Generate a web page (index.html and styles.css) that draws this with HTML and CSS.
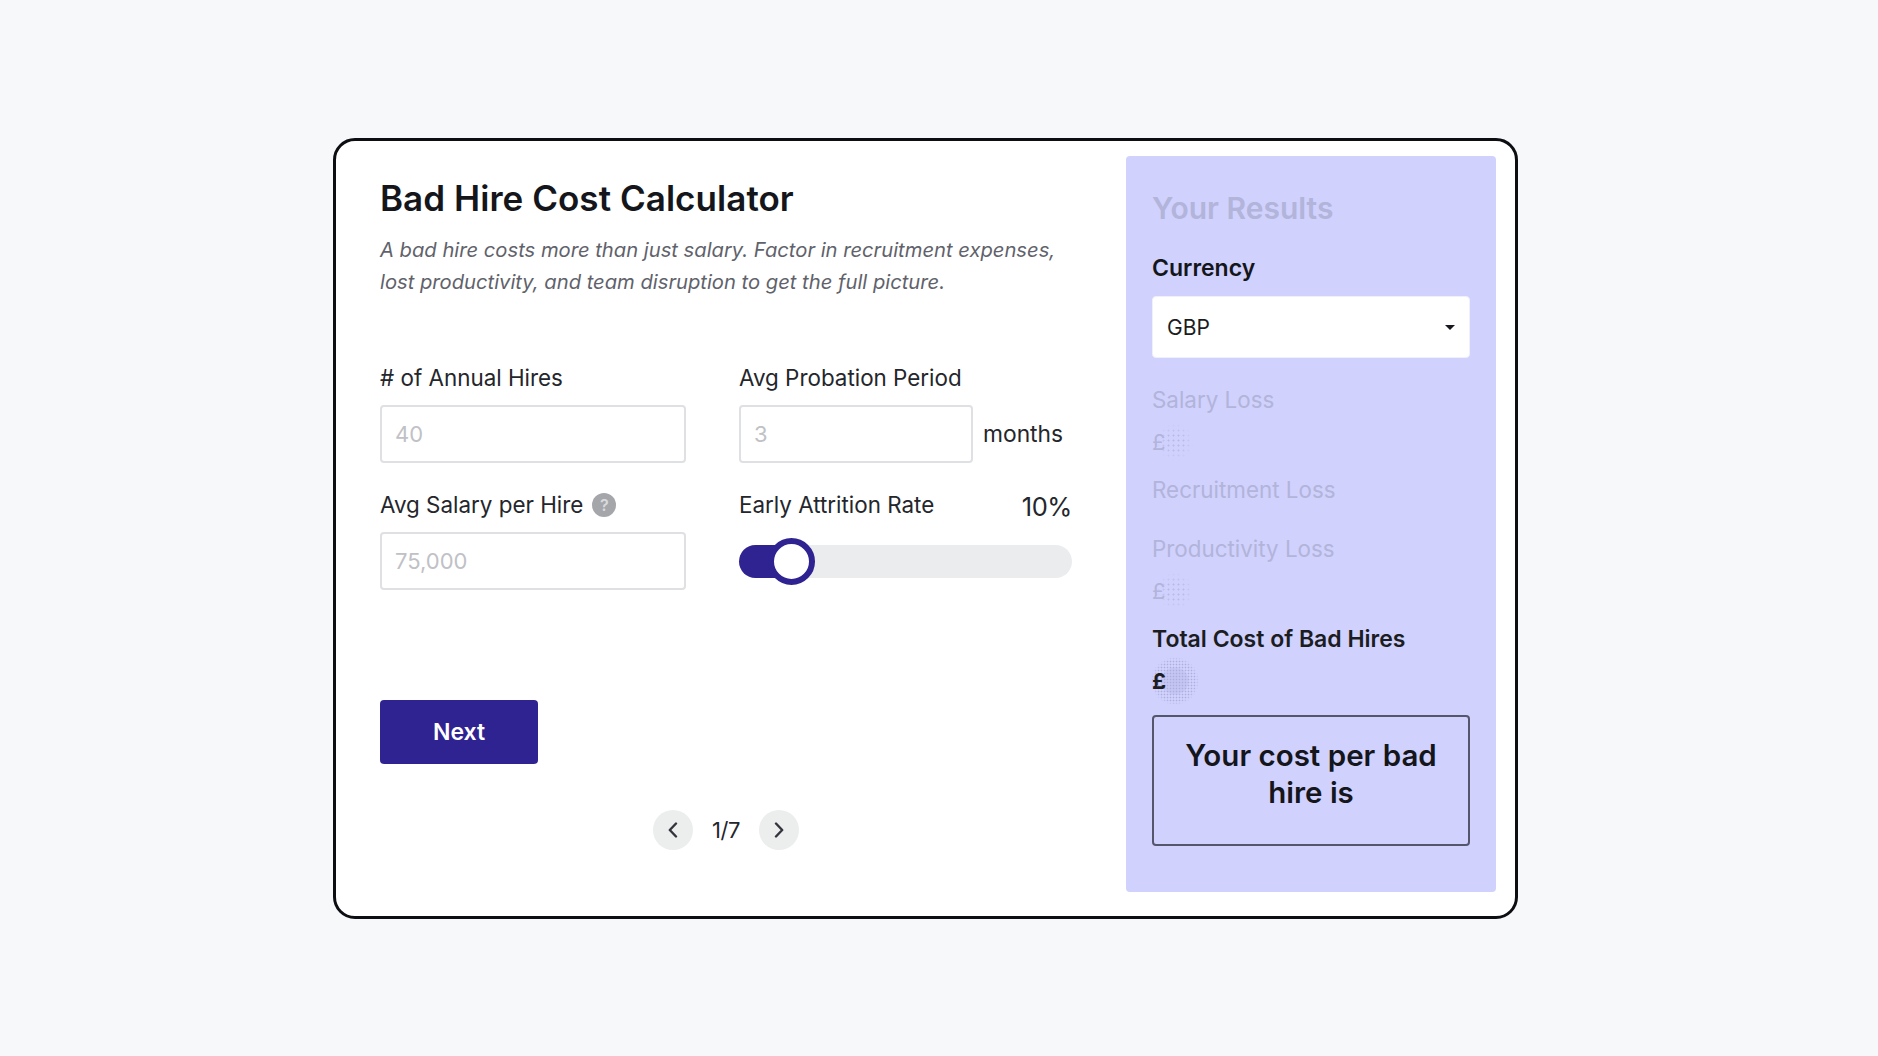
FILE: index.html
```html
<!DOCTYPE html>
<html lang="en">
<head>
<meta charset="utf-8">
<title>Bad Hire Cost Calculator</title>
<link rel="stylesheet" href="styles.css">
</head>
<body>
<main class="card">
  <section class="calc">
    <h1 class="title">Bad Hire Cost Calculator</h1>
    <p class="lead">A bad hire costs more than just salary. Factor in recruitment expenses, lost productivity, and team disruption to get the full picture.</p>
    <div class="fields">
      <div class="field">
        <label class="label">
          <span># of Annual Hires</span>
        </label>
        <input class="input" type="text" placeholder="40">
      </div>
      <div class="field">
        <label class="label">
          <span>Avg Probation Period</span>
        </label>
        <div class="with-unit">
          <input class="input input-short" type="text" placeholder="3">
          <span class="unit">months</span>
        </div>
      </div>
      <div class="field">
        <label class="label">
          <span>Avg Salary per Hire</span>
          <span class="help">?</span>
        </label>
        <input class="input" type="text" placeholder="75,000">
      </div>
      <div class="field">
        <label class="label label-split">
          <span>Early Attrition Rate</span>
          <span class="pct">10%</span>
        </label>
        <div class="slider">
          <div class="slider-fill"></div>
          <div class="slider-thumb"></div>
        </div>
      </div>
    </div>
    <button class="next" type="button">Next</button>
    <nav class="pager">
      <span class="pager-btn">
        <svg width="12" height="16" viewBox="0 0 12 16"><path d="M9 1.5 2.8 8 9 14.5" fill="none" stroke="#33343c" stroke-width="2.4" stroke-linecap="round" stroke-linejoin="round"/></svg>
      </span>
      <span class="pager-text">1/7</span>
      <span class="pager-btn">
        <svg width="12" height="16" viewBox="0 0 12 16"><path d="M3 1.5 9.2 8 3 14.5" fill="none" stroke="#33343c" stroke-width="2.4" stroke-linecap="round" stroke-linejoin="round"/></svg>
      </span>
    </nav>
  </section>
  <aside class="results">
    <h2 class="results-title">Your Results</h2>
    <div class="currency-label">Currency</div>
    <div class="select-wrap">
      <select class="select"><option>GBP</option></select>
      <span class="caret"></span>
    </div>
    <div class="metric muted">
      <div class="metric-label">Salary Loss</div>
      <div class="metric-value">£<span class="blur"></span></div>
    </div>
    <div class="metric muted">
      <div class="metric-label">Recruitment Loss</div>
    </div>
    <div class="metric muted metric-gap">
      <div class="metric-label">Productivity Loss</div>
      <div class="metric-value">£<span class="blur"></span></div>
    </div>
    <div class="metric total">
      <div class="metric-label">Total Cost of Bad Hires</div>
      <div class="metric-value">£<span class="blur blur-strong"></span></div>
    </div>
    <div class="per-hire">Your cost per bad hire is</div>
  </aside>
</main>
</body>
</html>
```
FILE: styles.css
```css
* { box-sizing: border-box; }
html, body { height: 100%; }
body {
  margin: 0;
  background: #f7f8fa;
  font-family: Inter, "Liberation Sans", sans-serif;
  color: #16181d;
  padding: 138px 0 0 333px;
}
.card {
  width: 1185px;
  height: 781px;
  background: #fff;
  border: 3px solid #0d0e12;
  border-radius: 22px;
  display: flex;
  justify-content: space-between;
  padding: 15px 19px 24px 44px;
}
.calc { width: 692px; padding-top: 20px; }
.title {
  margin: 0;
  font-size: 35px;
  line-height: 44px;
  font-weight: 600;
  letter-spacing: 0.05px;
  color: #14161b;
}
.lead {
  margin: 14px 0 0;
  font-size: 20.2px;
  line-height: 32px;
  font-style: italic;
  color: #5f626b;
}
.fields {
  display: grid;
  grid-template-columns: 306px 333px;
  column-gap: 53px;
  row-gap: 27px;
  margin-top: 65px;
}
.label {
  display: flex;
  align-items: center;
  gap: 9px;
  height: 30px;
  margin-bottom: 12px;
  font-size: 22.4px;
  line-height: 30px;
  color: #24262c;
}
.label-split { justify-content: space-between; }
.help {
  width: 24px;
  height: 24px;
  border-radius: 50%;
  background: #a4a6aa;
  color: #d9dadc;
  font-size: 16px;
  font-weight: 600;
  line-height: 24px;
  text-align: center;
}
.pct { padding-top: 3px; font-size: 25.5px; letter-spacing: -0.4px; color: #24262c; }
.input {
  display: block;
  width: 100%;
  height: 58px;
  padding: 0 13px;
  border: 2px solid #dfe0e3;
  border-radius: 4px;
  background: #fff;
  font-family: inherit;
  font-size: 22px;
}
.input::placeholder { color: #bfc1c6; opacity: 1; }
.with-unit { display: flex; align-items: center; gap: 10px; }
.input-short { width: 234px; }
.unit { padding-bottom: 2px; font-size: 22.8px; color: #24262c; }
.slider {
  position: relative;
  height: 33px;
  margin-top: 25px;
  border-radius: 17px;
  background: #ebecee;
}
.slider-fill {
  width: 50px;
  height: 100%;
  border-radius: 17px 0 0 17px;
  background: #2f2391;
}
.slider-thumb {
  position: absolute;
  left: 29px;
  top: -7px;
  width: 47px;
  height: 47px;
  border: 6px solid #2f2391;
  border-radius: 50%;
  background: #fff;
}
.next {
  display: block;
  width: 158px;
  height: 64px;
  margin-top: 110px;
  border: 0;
  border-radius: 4px;
  background: #2f2391;
  color: #fff;
  font-family: inherit;
  font-size: 23px;
  font-weight: 600;
}
.pager {
  display: flex;
  justify-content: center;
  align-items: center;
  gap: 19px;
  margin-top: 46px;
}
.pager-btn {
  display: flex;
  align-items: center;
  justify-content: center;
  width: 40px;
  height: 40px;
  border-radius: 50%;
  background: #eceded;
}
.pager-text { font-size: 22px; color: #24262c; letter-spacing: -0.5px; }
.results {
  isolation: isolate;
  width: 370px;
  padding: 32px 26px 0 26px;
  border-radius: 4px;
  background: #d0d1fd;
}
.results-title {
  margin: 0;
  font-size: 30px;
  line-height: 40px;
  font-weight: 600;
  color: #b2b4da;
}
.currency-label {
  margin-top: 25px;
  font-size: 23px;
  line-height: 30px;
  font-weight: 600;
  color: #14161b;
}
.select-wrap { position: relative; margin-top: 13px; }
.select {
  display: block;
  width: 100%;
  height: 62px;
  padding: 0 14px;
  border: 1px solid #f0f0fa;
  border-radius: 4px;
  background: #fff;
  appearance: none;
  font-family: inherit;
  font-size: 21px;
  color: #1b1d22;
}
.caret {
  position: absolute;
  right: 15px;
  top: 29px;
  border-left: 5.5px solid transparent;
  border-right: 5.5px solid transparent;
  border-top: 5.5px solid #16181d;
}
.metric { margin-top: 27px; font-size: 22.4px; line-height: 30px; }
.metric + .metric { margin-top: 18px; }
.metric + .metric-gap { margin-top: 29px; }
.muted { color: #b2b4da; }
.metric-value {
  position: relative;
  margin-top: 12px;
  font-size: 22px;
}
.blur {
  position: absolute;
  z-index: -1;
  left: 4px;
  top: -4px;
  width: 38px;
  height: 38px;
  border-radius: 50%;
  opacity: .55;
  background: radial-gradient(circle, #a6a6d6 0.8px, transparent 1.2px) 0 0 / 5px 5px;
  -webkit-mask-image: radial-gradient(circle, #000 0, #000 30%, transparent 70%);
  mask-image: radial-gradient(circle, #000 0, #000 30%, transparent 70%);
}
.blur-strong {
  left: -1px;
  top: -9px;
  width: 48px;
  height: 48px;
  opacity: .8;
  background:
    radial-gradient(circle, rgba(166,166,214,.4) 0, rgba(166,166,214,.3) 13px, transparent 14px),
    radial-gradient(circle, #a6a6d6 0.7px, transparent 1.1px) 0 0 / 3px 3px;
  -webkit-mask-image: radial-gradient(circle, #000 0, #000 60%, transparent 72%);
  mask-image: radial-gradient(circle, #000 0, #000 60%, transparent 72%);
}
.total { color: #1b1d22; }
.total .metric-label { font-weight: 600; font-size: 23px; }
.total .metric-value { font-weight: 700; }
.per-hire {
  height: 131px;
  margin-top: 19px;
  padding: 20px 16px 0;
  border: 2px solid #55556c;
  border-radius: 4px;
  font-size: 29.5px;
  line-height: 37px;
  font-weight: 600;
  text-align: center;
  color: #14161b;
}
```
